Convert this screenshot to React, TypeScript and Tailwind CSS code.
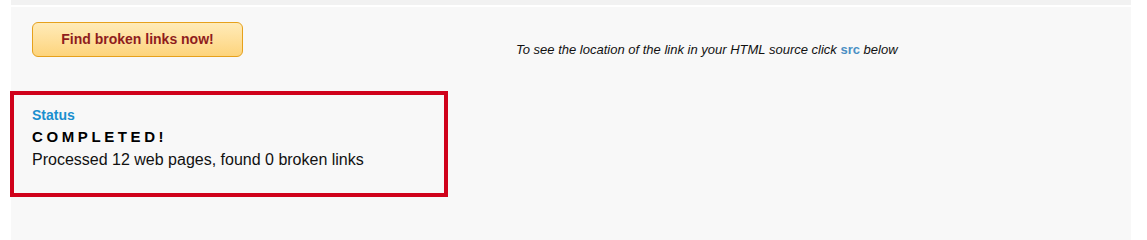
export default function App() {
  return (
    <div className="min-h-screen bg-white font-['Liberation_Sans',Arial,sans-serif]">
      {/* top strip */}
      <div className="ml-[11px] h-[5px] w-[1120px] bg-[#f2f2f2]" />

      {/* main panel */}
      <div className="ml-[11px] mt-[2px] w-[1120px] bg-[#f8f8f8] pt-[15px] pb-[44px]">
        <div className="flex items-start">
          <button className="ml-[21px] h-[35px] w-[211px] rounded-[6px] border border-[#e6a11c] bg-gradient-to-b from-[#ffebb8] to-[#fdd47c] text-[14px] font-bold text-[#8f1d1d]">
            Find broken links now!
          </button>
          <p className="ml-[273px] mt-[20px] text-[13px] leading-[16px] italic text-[#111]">
            To see the location of the link in your HTML source click{" "}
            <span className="font-bold not-italic text-[#4a8fc4]">src</span> below
          </p>
        </div>

        {/* status box */}
        <div className="-ml-px mt-[33px] h-[106px] w-[438px] border-4 border-[#d0021b] pl-[18px] pt-[10px]">
          <div className="text-[14px] leading-[20px] font-bold text-[#1a8fcf]">Status</div>
          <div className="mt-[1px] text-[15px] leading-[22px] font-bold tracking-[3.6px] text-black">
            COMPLETED!
          </div>
          <div className="mt-[1px] text-[16px] leading-[22px] text-[#111]">
            Processed 12 web pages, found 0 broken links
          </div>
        </div>
      </div>
    </div>
  );
}
